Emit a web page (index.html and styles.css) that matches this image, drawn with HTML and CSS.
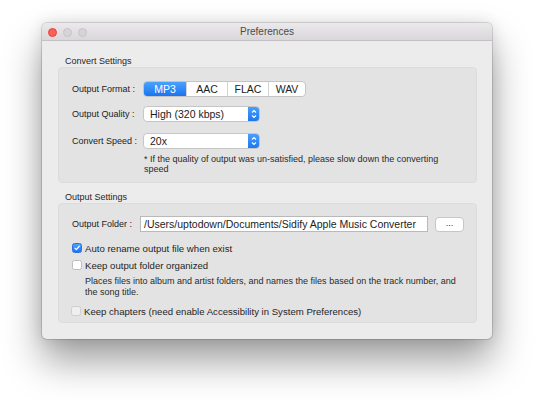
FILE: index.html
```
<!DOCTYPE html>
<html>
<head>
<meta charset="utf-8">
<link rel="stylesheet" href="styles.css">
</head>
<body>
<div class="stage">
  <div class="window">
    <div class="titlebar">
      <div class="lights">
        <span class="light red"></span>
        <span class="light gray"></span>
        <span class="light gray"></span>
      </div>
      <div class="title">Preferences</div>
      <div></div>
    </div>
    <div class="content">
      <div class="group-label">Convert Settings</div>
      <div class="group group-convert">
        <div class="row row-format">
          <span class="label">Output Format :</span>
          <div class="segmented">
            <span class="seg seg-mp3 selected">MP3</span>
            <span class="seg seg-aac">AAC</span>
            <span class="seg seg-flac">FLAC</span>
            <span class="seg seg-wav">WAV</span>
          </div>
        </div>
        <div class="row row-quality">
          <span class="label">Output Quality :</span>
          <div class="popup">
            <span class="popup-text">High (320 kbps)</span>
            <span class="stepper"><svg width="12" height="16" viewBox="0 0 12 16"><polyline points="4,6.5 6,4.5 8,6.5" fill="none" stroke="#fff" stroke-width="1.1"/><polyline points="4,9.5 6,11.5 8,9.5" fill="none" stroke="#fff" stroke-width="1.1"/></svg></span>
          </div>
        </div>
        <div class="row row-speed">
          <span class="label">Convert Speed :</span>
          <div class="popup">
            <span class="popup-text">20x</span>
            <span class="stepper"><svg width="12" height="16" viewBox="0 0 12 16"><polyline points="4,6.5 6,4.5 8,6.5" fill="none" stroke="#fff" stroke-width="1.1"/><polyline points="4,9.5 6,11.5 8,9.5" fill="none" stroke="#fff" stroke-width="1.1"/></svg></span>
          </div>
        </div>
        <div class="note">* If the quality of output was un-satisfied, please slow down the converting<br>speed</div>
      </div>

      <div class="group-label group-label-2">Output Settings</div>
      <div class="group group-output">
        <div class="row row-folder">
          <span class="label label-folder">Output Folder :</span>
          <div class="field">/Users/uptodown/Documents/Sidify Apple Music Converter</div>
          <div class="button">...</div>
        </div>
        <div class="check check-1">
          <span class="box checked"><svg width="10" height="10" viewBox="0 0 10 10"><polyline points="2.3,5.2 4.2,7.1 7.8,2.8" fill="none" stroke="#fff" stroke-width="1.5" stroke-linecap="round" stroke-linejoin="round"/></svg></span>
          <span class="check-text">Auto rename output file when exist</span>
        </div>
        <div class="check check-2">
          <span class="box"></span>
          <span class="check-text">Keep output folder organized</span>
        </div>
        <div class="desc">Places files into album and artist folders, and names the files based on the track number, and<br>the song title.</div>
        <div class="check check-3">
          <span class="box"></span>
          <span class="check-text">Keep chapters (need enable Accessibility in System Preferences)</span>
        </div>
      </div>
    </div>
  </div>
</div>
</body>
</html>
```
FILE: styles.css
```
* { box-sizing: border-box; }
html, body {
  margin: 0;
  padding: 0;
  background: #ffffff;
  width: 535px;
  height: 400px;
  overflow: hidden;
  font-family: "Liberation Sans", Arial, sans-serif;
  color: #1f1f1f;
}
.stage {
  padding: 23px 0 0 42px;
}
.window {
  width: 450px;
  height: 316px;
  background: #ececec;
  border-radius: 5px;
  box-shadow: 0 0 0 1px rgba(0,0,0,0.13), 0 22px 38px rgba(0,0,0,0.38), 0 0 16px rgba(0,0,0,0.12);
  overflow: hidden;
  display: flex;
  flex-direction: column;
}
.titlebar {
  height: 18px;
  flex: none;
  background: linear-gradient(#ebe9eb, #d9d7d9);
  border-bottom: 1px solid #c3c1c3;
  display: grid;
  grid-template-columns: 1fr auto 1fr;
  align-items: center;
}
.lights {
  display: flex;
  gap: 6px;
  padding-left: 6px;
  padding-top: 1px;
}
.light {
  width: 9px;
  height: 9px;
  border-radius: 50%;
}
.light.red {
  background: #fc5f57;
  border: 0.5px solid #e2463f;
}
.light.gray {
  background: #d6d5d6;
  border: 0.5px solid #c6c4c6;
}
.title {
  font-size: 10px;
  color: #4a4a4a;
  line-height: 12px;
  padding-top: 1px;
}
.content {
  padding: 15px 15px 0 16px;
  display: flex;
  flex-direction: column;
}
.group-label {
  font-size: 9px;
  line-height: 11px;
  height: 11px;
  padding-left: 7px;
  color: #262626;
}
.group-label-2 {
  margin-top: 9px;
}
.group {
  background: #e3e3e3;
  border: 1px solid #dcdcdc;
  border-radius: 4px;
  display: flex;
  flex-direction: column;
}
.group-convert {
  height: 116px;
  padding: 13px 0 0 13px;
}
.group-output {
  height: 120px;
  padding: 12px 0 0 13px;
}
.row {
  display: flex;
  align-items: center;
  height: 16px;
}
.row-quality { margin-top: 9px; }
.row-speed { margin-top: 11px; }
.label {
  font-size: 9px;
  width: 71px;
  flex: none;
  color: #222;
}
.label-folder { width: 68px; }
.segmented {
  display: flex;
  height: 16px;
  background: #fff;
  border: 1px solid #c4c4c4;
  border-radius: 4px;
  overflow: hidden;
}
.seg {
  font-size: 10.5px;
  line-height: 14px;
  text-align: center;
  border-left: 1px solid #d3d3d3;
  color: #1c1c1c;
}
.seg-mp3 { width: 42px; border-left: none; }
.seg-aac { width: 41px; }
.seg-flac { width: 41px; }
.seg-wav { width: 37px; }
.seg.selected {
  background: linear-gradient(#4aa2fd, #1b74ef);
  color: #fff;
}
.popup {
  display: flex;
  width: 117px;
  height: 16px;
  background: #fff;
  border: 1px solid #c6c6c6;
  border-radius: 4px;
  overflow: hidden;
}
.popup-text {
  flex: 1;
  font-size: 10.5px;
  line-height: 14px;
  padding-left: 6px;
  color: #1c1c1c;
}
.stepper {
  width: 12px;
  flex: none;
  background: linear-gradient(#4aa2fd, #1b74ef);
  display: flex;
  align-items: center;
  justify-content: center;
  margin: -1px -1px -1px 0;
  border-radius: 0 4px 4px 0;
}
.stepper svg { display: block; }
.note {
  font-size: 9px;
  line-height: 10px;
  margin-top: 5px;
  padding-left: 72px;
  color: #2a2a2a;
}
.field {
  width: 288px;
  height: 16px;
  background: #fff;
  border: 1px solid #b9b9b9;
  font-size: 10.5px;
  line-height: 14px;
  padding-left: 3px;
  color: #1c1c1c;
  white-space: nowrap;
  overflow: hidden;
}
.button {
  width: 29px;
  height: 15px;
  margin-left: 7px;
  background: #fff;
  border: 1px solid #c6c6c6;
  border-radius: 4px;
  font-size: 9px;
  line-height: 11px;
  text-align: center;
  color: #333;
}
.check {
  display: flex;
  align-items: center;
  height: 12px;
}
.check-1 { margin-top: 10px; }
.check-2 { margin-top: 5px; }
.check-3 { margin-top: 8px; margin-left: -1px; }
.box {
  width: 10px;
  height: 10px;
  flex: none;
  border-radius: 2.5px;
  background: #fff;
  border: 1px solid #bdbdbd;
  display: flex;
  align-items: center;
  justify-content: center;
}
.box.checked {
  background: linear-gradient(#4ca3fd, #1d72ef);
  border-color: #2a6fe0;
}
.box svg { display: block; }
.check-3 .box {
  background: #efefef;
  border-color: #cfcfcf;
}
.check-text {
  font-size: 9.6px;
  margin-left: 3px;
  color: #1f1f1f;
}
.desc {
  font-size: 9px;
  line-height: 10.5px;
  margin-top: 5px;
  padding-left: 13px;
  color: #2a2a2a;
}
```
